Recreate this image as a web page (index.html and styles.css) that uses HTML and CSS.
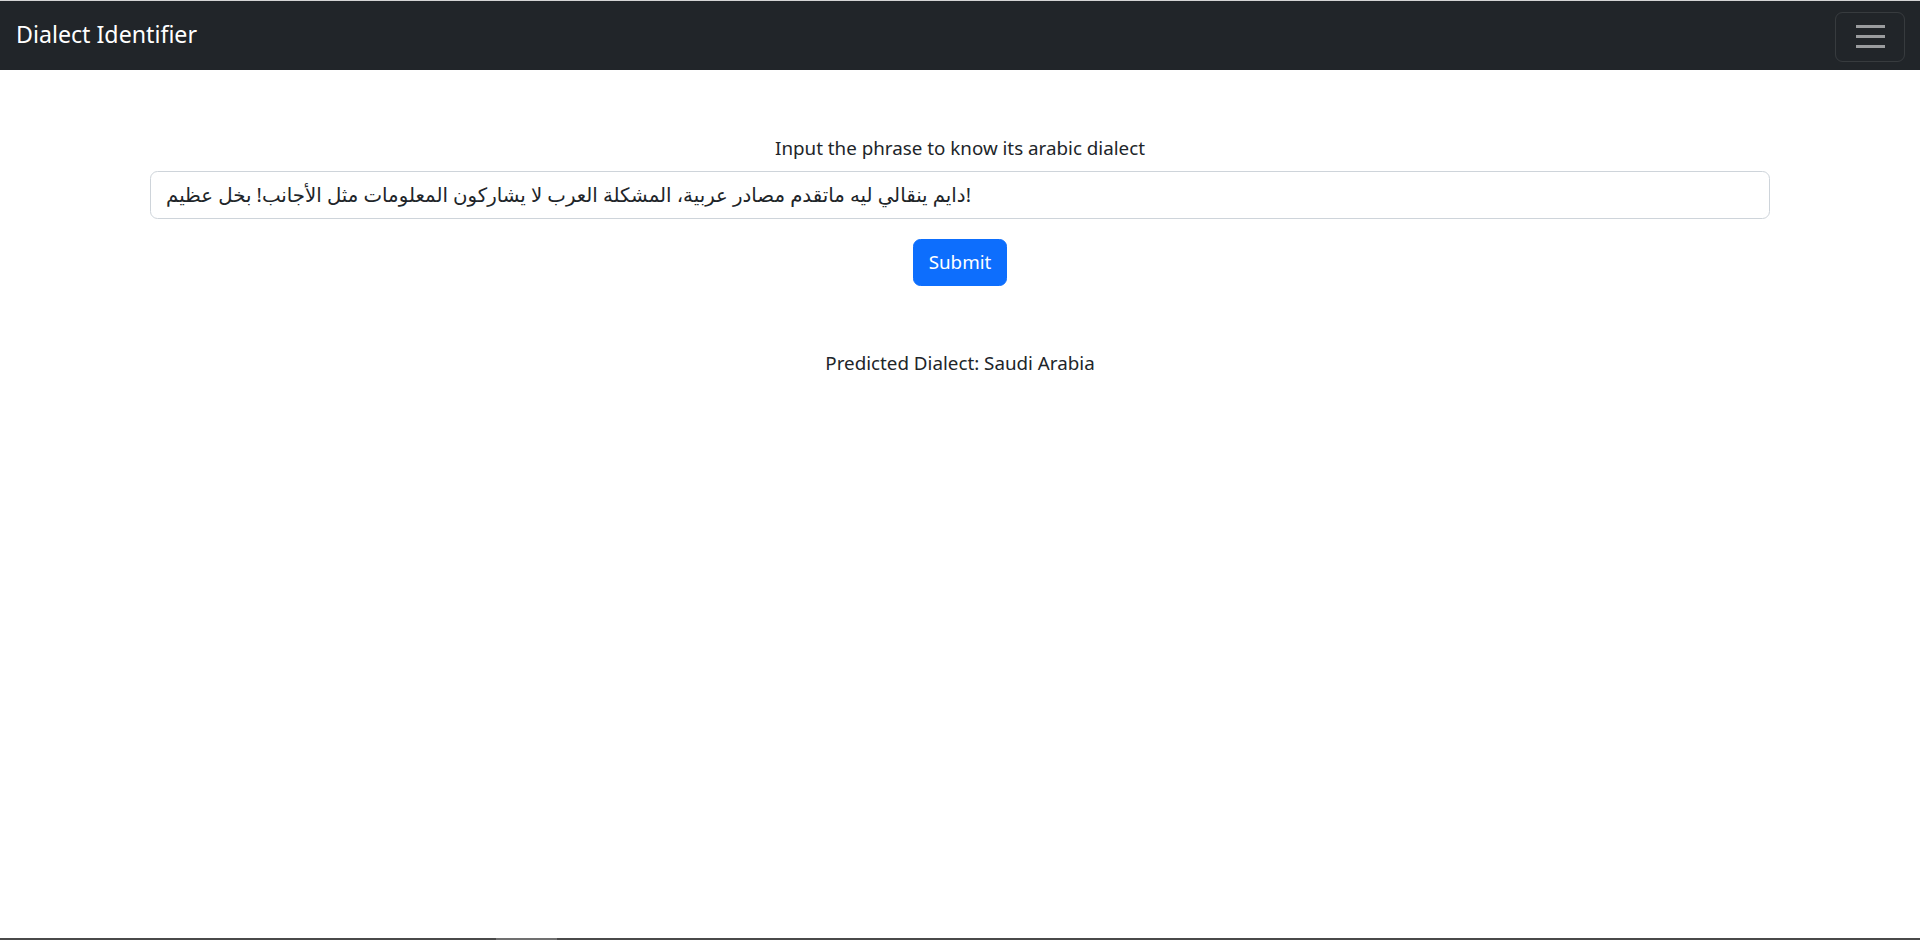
FILE: index.html
```html
<!DOCTYPE html>
<html lang="en">
<head>
<meta charset="utf-8">
<title>Dialect Identifier</title>
<link rel="stylesheet" href="styles.css">
</head>
<body>
<div class="topline"></div>
<nav class="navbar">
  <a class="brand" href="#">Dialect Identifier</a>
  <button class="toggler" type="button" aria-label="Toggle navigation">
    <span class="bar"></span><span class="bar"></span><span class="bar"></span>
  </button>
</nav>
<main class="container">
  <form class="form">
    <label class="label" for="phrase">Input the phrase to know its arabic dialect</label>
    <input class="input" id="phrase" type="text" value="دايم ينقالي ليه ماتقدم مصادر عربية، المشكلة العرب لا يشاركون المعلومات مثل الأجانب! بخل عظيم!">
    <button class="btn" type="button">Submit</button>
  </form>
  <p class="result">Predicted Dialect: Saudi Arabia</p>
</main>
<div class="hscroll"><div class="thumb"></div></div>
</body>
</html>
```
FILE: styles.css
```css
* { box-sizing: border-box; }
html, body { margin: 0; padding: 0; }
body {
  font-family: "Noto Sans", "DejaVu Sans", sans-serif;
  font-size: 18.8px;
  line-height: 1.5;
  color: #212529;
  background: #fff;
  height: 940px;
  overflow: hidden;
}
.topline { height: 1px; background: #d4d4d4; }
.navbar {
  height: 69px;
  background: #212529;
  display: flex;
  align-items: center;
  justify-content: space-between;
  padding: 0 15px;
}
.brand {
  color: #fff;
  text-decoration: none;
  font-size: 23.2px;
  line-height: 1;
  padding-left: 1px;
  margin-top: -2px;
}
.toggler {
  width: 70px;
  height: 50px;
  margin-top: 2px;
  background: transparent;
  border: 1.25px solid rgba(255,255,255,0.1);
  border-radius: 7.5px;
  display: flex;
  flex-direction: column;
  align-items: center;
  justify-content: center;
  gap: 7.5px;
  padding: 0;
}
.toggler .bar {
  display: block;
  width: 29px;
  height: 2.5px;
  background: rgba(255,255,255,0.55);
}
.container {
  width: 1650px;
  margin: 0 auto;
  padding: 0 15px;
  text-align: center;
}
.form {
  display: flex;
  flex-direction: column;
  align-items: center;
  padding-top: 63px;
}
.label {
  display: block;
  line-height: 30px;
  margin-bottom: 8px;
}
.input {
  width: 100%;
  height: 47.5px;
  padding: 7.5px 15px;
  font-family: "Noto Sans", "DejaVu Sans", sans-serif;
  font-size: 19.75px;
  color: #212529;
  border: 1.25px solid #ced4da;
  border-radius: 7.5px;
  background: #fff;
  outline: none;
}
.btn {
  margin-top: 20px;
  height: 47.5px;
  padding: 0 15px;
  font-family: "Noto Sans", "DejaVu Sans", sans-serif;
  font-size: 18.8px;
  color: #fff;
  background: #0d6efd;
  border: 1.25px solid #0d6efd;
  border-radius: 7.5px;
}
.result {
  margin: 62px 0 0;
  line-height: 30px;
}
.hscroll {
  position: fixed;
  left: 0;
  right: 0;
  bottom: 0;
  height: 2px;
  background: #4a4a4a;
}
.hscroll .thumb {
  position: absolute;
  left: 496px;
  width: 61px;
  height: 2px;
  background: #707070;
}
```
